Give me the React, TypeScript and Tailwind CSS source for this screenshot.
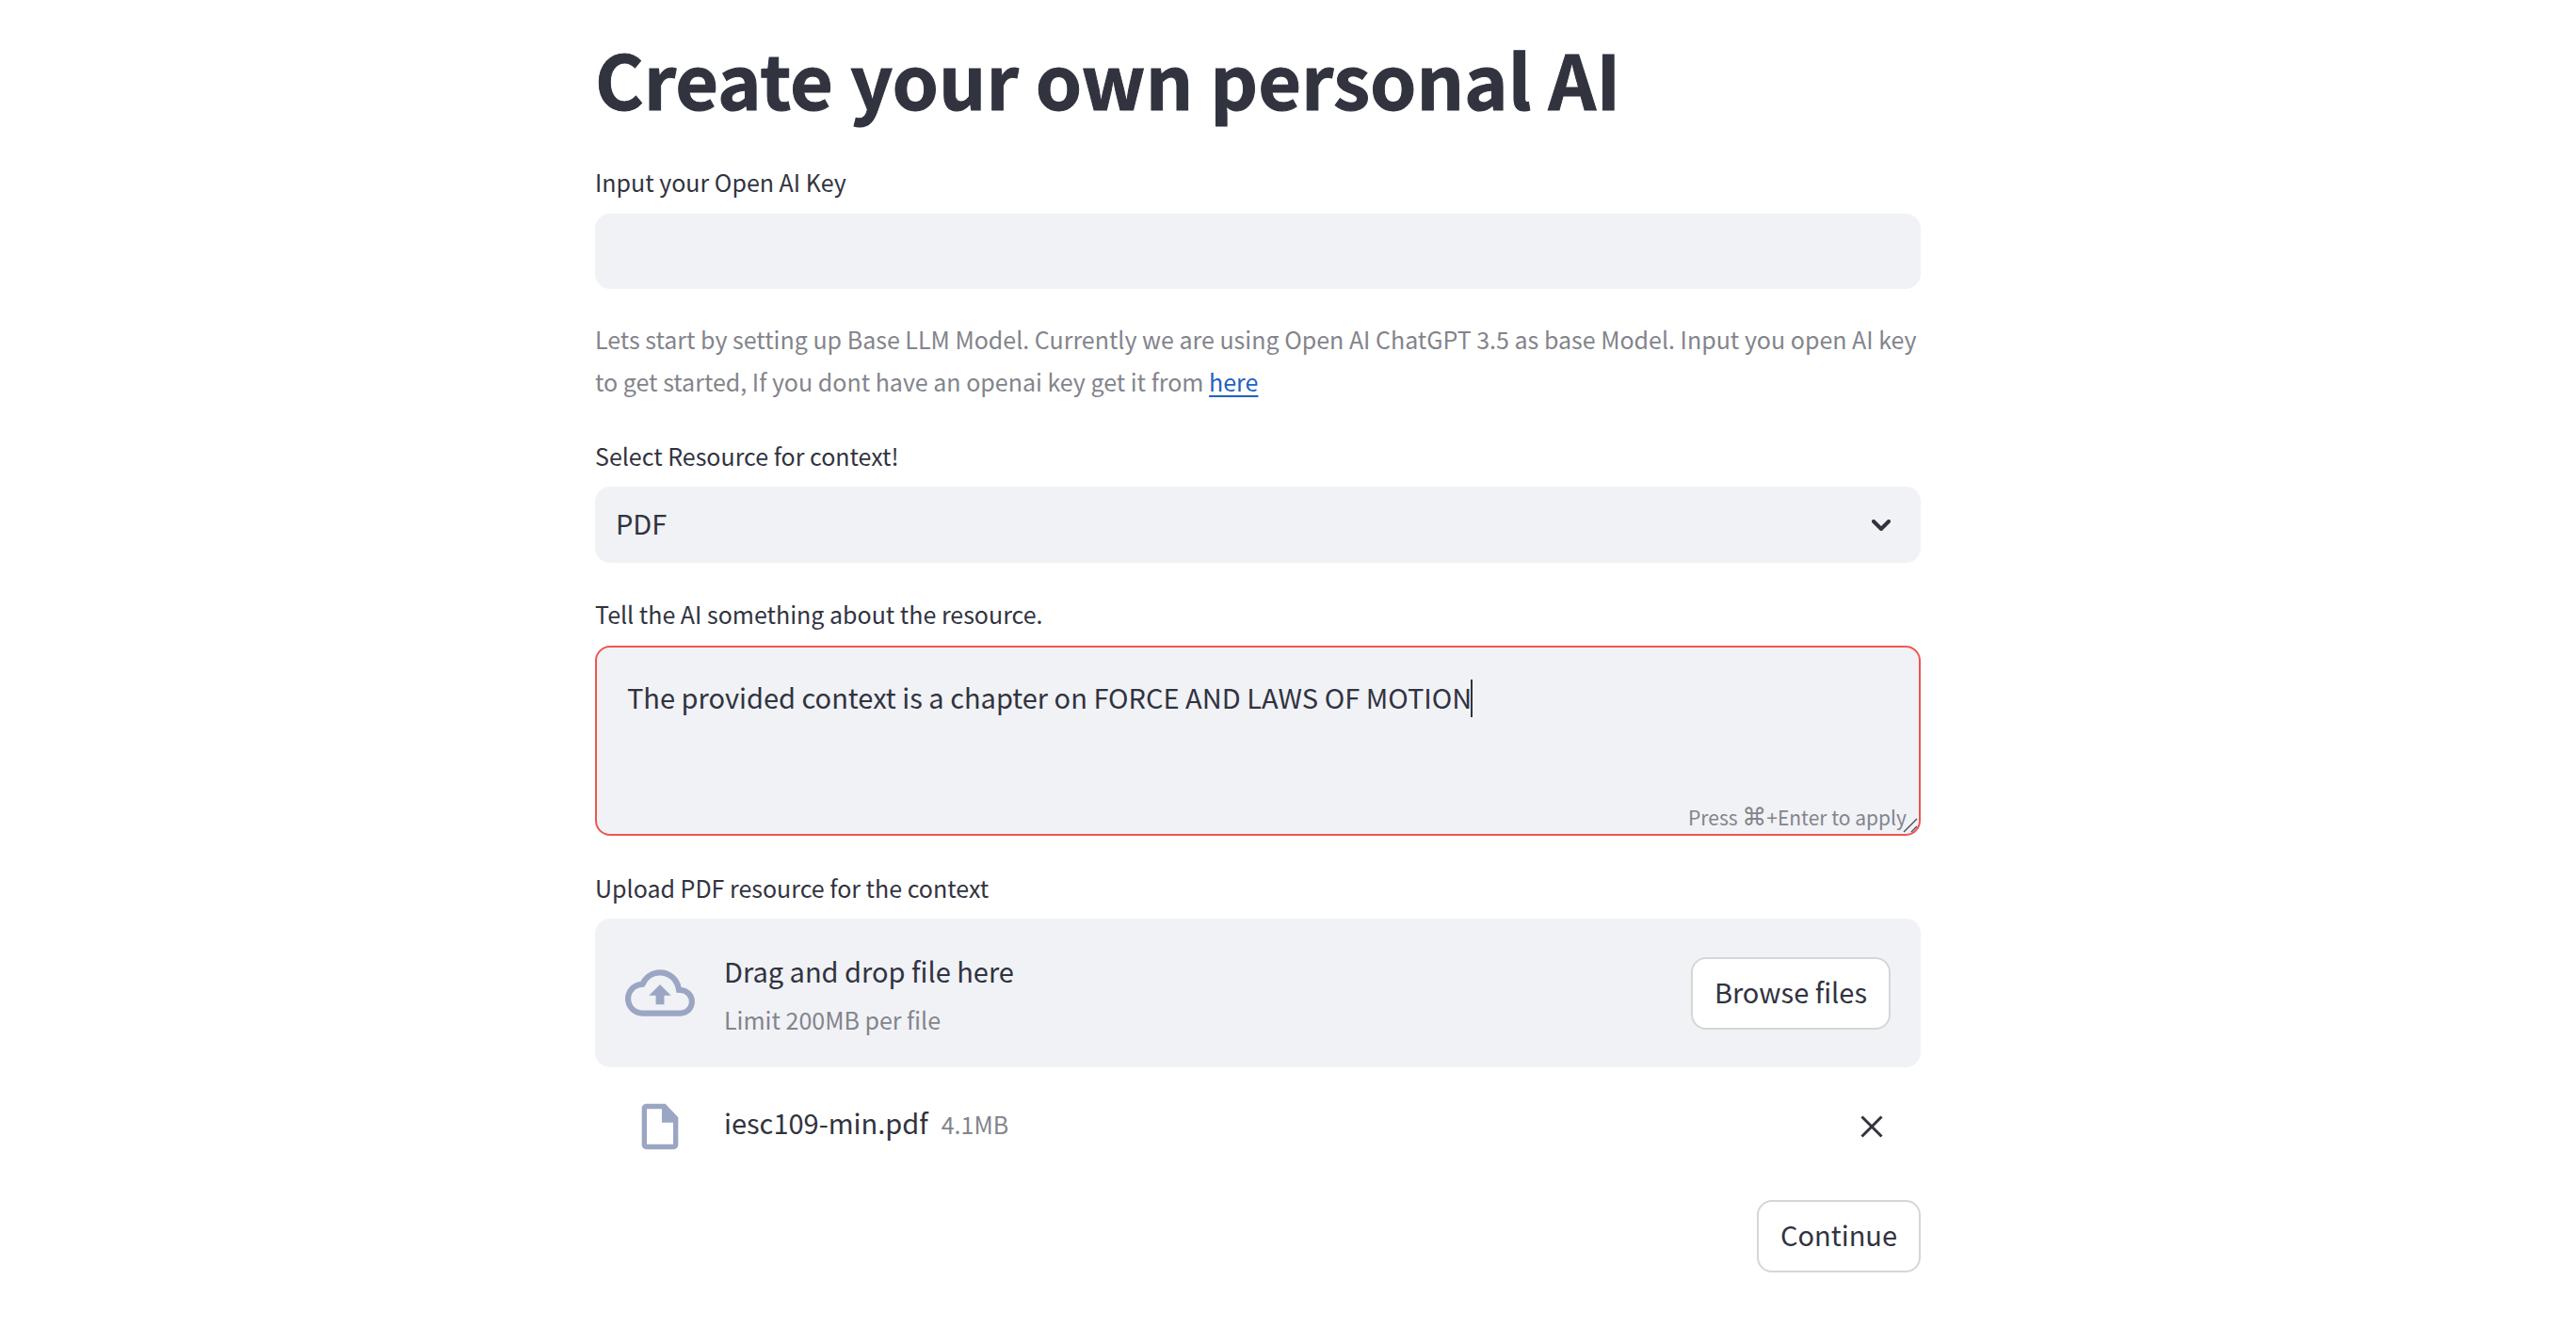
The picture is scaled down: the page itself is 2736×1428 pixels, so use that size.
import { useState } from "react";

const FILE_NAME = "iesc109-min.pdf";

const labelClass = "block text-[25px] leading-[40px] text-[#31333f]";
const boxClass = "rounded-[16px] bg-[#f0f2f6]";
const buttonClass =
  "shrink-0 rounded-[16px] border-2 border-[#d6d6d9] bg-white px-[23px] pt-[14px] pb-[18px] text-[29px] leading-[41px] text-[#31333f]";

function CloudUploadIcon() {
  return (
    <svg viewBox="0 0 24 24" className="size-[74px] shrink-0" fill="#9ba6c4" aria-hidden="true">
      <path d="M19.35 10.04A7.49 7.49 0 0 0 12 4C9.11 4 6.6 5.64 5.35 8.04A5.994 5.994 0 0 0 0 14c0 3.31 2.69 6 6 6h13c2.76 0 5-2.24 5-5 0-2.64-2.05-4.78-4.65-4.96zM19 18H6c-2.21 0-4-1.79-4-4 0-2.05 1.53-3.76 3.56-3.97l1.07-.11.5-.95A5.469 5.469 0 0 1 12 6c2.62 0 4.88 1.86 5.39 4.43l.3 1.5 1.53.11A2.98 2.98 0 0 1 22 15c0 1.65-1.35 3-3 3zM8.2 12.9h2.35v3.1h2.9v-3.1H15.8L12 9.1z" />
    </svg>
  );
}

function FileIcon() {
  return (
    <svg viewBox="0 0 24 24" className="size-[58px] shrink-0" fill="#9ba6c4" aria-hidden="true">
      <path d="M14.3 2H6c-1.1 0-2 .9-2 2v16c0 1.1.9 2 2 2h12c1.1 0 2-.9 2-2V8l-5.7-6zM6.2 19.8V4.2h6.6v6H17.8v9.6H6.2z" />
    </svg>
  );
}

function CloseIcon() {
  return (
    <svg viewBox="0 0 24 24" className="size-[24px]" fill="none" stroke="#31333f" strokeWidth="3" aria-hidden="true">
      <path d="M1.5 1.5l21 21M22.5 1.5l-21 21" />
    </svg>
  );
}

function ChevronIcon() {
  return (
    <svg
      viewBox="0 0 20 12"
      className="pointer-events-none absolute top-1/2 right-[32px] h-[12px] w-[20px] -translate-y-1/2"
      fill="none"
      stroke="#31333f"
      strokeWidth="4"
      strokeLinecap="round"
      strokeLinejoin="round"
      aria-hidden="true"
    >
      <path d="M2 2l8 8 8-8" />
    </svg>
  );
}

export default function App() {
  const [key, setKey] = useState("");
  const [resource, setResource] = useState("PDF");
  const [about, setAbout] = useState("The provided context is a chapter on FORCE AND LAWS OF MOTION");

  return (
    <main className="min-h-screen bg-white pr-[64px] font-['Noto_Sans_CJK_SC','Noto_Sans',sans-serif] text-[#31333f]">
      <div className="mx-auto flex max-w-[1408px] flex-col pt-[35px] pb-[76px]">
        <h1 className="text-[79px] leading-[96px] font-bold [-webkit-text-stroke:1px_#31333f]">
          Create your own personal AI
        </h1>

        <div className="mt-[42px]">
          <label htmlFor="key" className={labelClass}>
            Input your Open AI Key
          </label>
          <input
            id="key"
            type="text"
            value={key}
            onChange={(e) => setKey(e.target.value)}
            className={`${boxClass} mt-[14px] block h-[80px] w-full px-[22px] text-[29px] outline-none`}
          />
        </div>

        <p className="mt-[31px] text-[25px] leading-[45px] text-[#83848c]">
          Lets start by setting up Base LLM Model. Currently we are using Open AI ChatGPT 3.5 as base Model. Input you
          open AI key to get started, If you dont have an openai key get it from{" "}
          <a href="#openai-key" className="text-[#1f60c4] underline decoration-2 underline-offset-4">
            here
          </a>
        </p>

        <div className="mt-[36px]">
          <label htmlFor="resource" className={labelClass}>
            Select Resource for context!
          </label>
          <div className="relative mt-[13px]">
            <select
              id="resource"
              value={resource}
              onChange={(e) => setResource(e.target.value)}
              className={`${boxClass} block h-[81px] w-full appearance-none px-[22px] pb-[3px] text-[29px] outline-none`}
            >
              <option>PDF</option>
            </select>
            <ChevronIcon />
          </div>
        </div>

        <div className="mt-[34px]">
          <label htmlFor="about" className={labelClass}>
            Tell the AI something about the resource.
          </label>
          <div className="relative mt-[14px]">
            <textarea
              id="about"
              value={about}
              onChange={(e) => setAbout(e.target.value)}
              className={`${boxClass} block h-[202px] w-full resize-none border-2 border-[#ef5552] px-[32px] py-[29px] text-[29px] leading-[46px] caret-transparent outline-none`}
            />
            <span className="absolute top-[36px] left-[930px] h-[40px] w-[2px] bg-[#31333f]" />
            <span className="pointer-events-none absolute right-[15px] bottom-[4px] text-[21px] leading-[32px] text-[#83848c]">
              Press <span className="font-['DejaVu_Sans',sans-serif] text-[26px] leading-none">⌘</span>+Enter to apply
            </span>
            <svg
              viewBox="0 0 16 16"
              className="absolute right-[3px] bottom-[3px] size-[16px]"
              stroke="#4a4c55"
              strokeWidth="1.4"
              aria-hidden="true"
            >
              <path d="M1 15L15 1M9 15l6-6" />
            </svg>
          </div>
        </div>

        <div className="mt-[35px]">
          <label htmlFor="file" className={labelClass}>
            Upload PDF resource for the context
          </label>
          <div className={`${boxClass} mt-[13px] flex items-center px-[32px] py-[30px]`}>
            <CloudUploadIcon />
            <input id="file" type="file" className="hidden" />
            <div className="ml-[31px] grow">
              <div className="text-[29px] leading-[50px]">Drag and drop file here</div>
              <div className="mt-[6px] text-[25px] leading-[42px] text-[#83848c]">Limit 200MB per file</div>
            </div>
            <button type="button" className={buttonClass}>
              Browse files
            </button>
          </div>
          <div className="mt-[34px] flex items-center pr-[40px] pl-[40px]">
            <FileIcon />
            <div className="ml-[39px] flex grow items-baseline gap-[14px] pb-[8px]">
              <span className="text-[29px] leading-[46px]">{FILE_NAME}</span>
              <span className="text-[25px] leading-[46px] text-[#83848c]">4.1MB</span>
            </div>
            <button type="button" aria-label={`Remove ${FILE_NAME}`}>
              <CloseIcon />
            </button>
          </div>
        </div>

        <button type="button" className={`${buttonClass} mt-[49px] self-end`}>
          Continue
        </button>
      </div>
    </main>
  );
}
